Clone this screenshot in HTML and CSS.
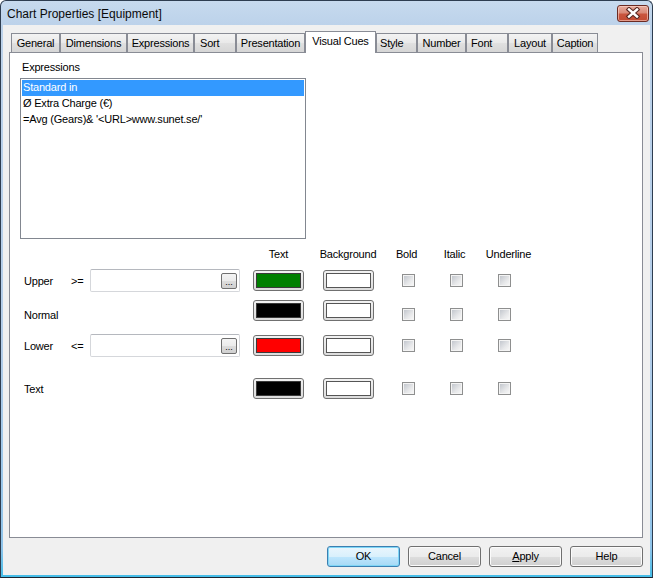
FILE: index.html
```html
<!DOCTYPE html>
<html>
<head>
<meta charset="utf-8">
<title>Chart Properties [Equipment]</title>
<link rel="stylesheet" href="styles.css">
</head>
<body>
<div class="window">
  <div class="titlebar">
    <span class="title">Chart Properties [Equipment]</span>
    <div class="close">
      <svg width="16" height="12" viewBox="0 0 16 12">
        <path d="M4 2.5 L12 9.5 M12 2.5 L4 9.5" stroke="#5a2a24" stroke-width="4.6" stroke-linecap="square" fill="none"/>
        <path d="M4 2.5 L12 9.5 M12 2.5 L4 9.5" stroke="#ffffff" stroke-width="2.4" stroke-linecap="square" fill="none"/>
      </svg>
    </div>
  </div>
  <div class="client">
    <div class="tabs">
      <div class="tab tab-general">General</div>
      <div class="tab tab-dimensions">Dimensions</div>
      <div class="tab tab-expressions">Expressions</div>
      <div class="tab tab-sort">Sort</div>
      <div class="tab tab-presentation">Presentation</div>
      <div class="tab tab-visual active">Visual Cues</div>
      <div class="tab tab-style">Style</div>
      <div class="tab tab-number">Number</div>
      <div class="tab tab-font">Font</div>
      <div class="tab tab-layout">Layout</div>
      <div class="tab tab-caption">Caption</div>
    </div>
    <div class="panel">
      <div class="expr-label">Expressions</div>
      <div class="listbox">
        <div class="item selected">Standard in</div>
        <div class="item">Ø Extra Charge (€)</div>
        <div class="item">=Avg (Gears)&amp; '&lt;URL&gt;www.sunet.se/'</div>
      </div>
      <div class="cues">
        <div class="cue-row head">
          <span class="col-text h">Text</span>
          <span class="col-bg h">Background</span>
          <span class="col-bold h h-bold">Bold</span>
          <span class="col-italic h h-italic">Italic</span>
          <span class="col-under h h-under">Underline</span>
        </div>
        <div class="cue-row r-upper">
          <span class="lbl">Upper</span>
          <span class="op">&gt;=</span>
          <div class="field"><div class="dots">...</div></div>
          <div class="col-text swatch"><i class="fill green"></i></div>
          <div class="col-bg swatch"><i class="fill white"></i></div>
          <i class="col-bold cb"></i>
          <i class="col-italic cb"></i>
          <i class="col-under cb"></i>
        </div>
        <div class="cue-row r-normal">
          <span class="lbl">Normal</span>
          <div class="col-text swatch"><i class="fill black"></i></div>
          <div class="col-bg swatch"><i class="fill white"></i></div>
          <i class="col-bold cb"></i>
          <i class="col-italic cb"></i>
          <i class="col-under cb"></i>
        </div>
        <div class="cue-row r-lower">
          <span class="lbl">Lower</span>
          <span class="op">&lt;=</span>
          <div class="field"><div class="dots">...</div></div>
          <div class="col-text swatch"><i class="fill red"></i></div>
          <div class="col-bg swatch"><i class="fill white"></i></div>
          <i class="col-bold cb"></i>
          <i class="col-italic cb"></i>
          <i class="col-under cb"></i>
        </div>
        <div class="cue-row r-text">
          <span class="lbl">Text</span>
          <div class="col-text swatch"><i class="fill black"></i></div>
          <div class="col-bg swatch"><i class="fill white"></i></div>
          <i class="col-bold cb"></i>
          <i class="col-italic cb"></i>
          <i class="col-under cb"></i>
        </div>
      </div>
    </div>
    <div class="buttons">
      <div class="btn default">OK</div>
      <div class="btn">Cancel</div>
      <div class="btn"><u>A</u>pply</div>
      <div class="btn">Help</div>
    </div>
  </div>
</div>
</body>
</html>
```
FILE: styles.css
```css
html, body {
  margin: 0;
  padding: 0;
  background: #ffffff;
}
body {
  width: 653px;
  height: 578px;
  font-family: "Liberation Sans", Arial, sans-serif;
  font-size: 11px;
  color: #000;
}
.window {
  width: 653px;
  height: 578px;
  box-sizing: border-box;
  border: 1px solid #2e3d50;
  border-bottom-color: #1b2430;
  border-radius: 6px 6px 0 0;
  background: linear-gradient(#c7daee 0px, #bcd2ea 24px, #b3cde9 60%, #8fc4ea 95%, #43bde8 100%);
  display: flex;
  flex-direction: column;
  overflow: hidden;
}
.titlebar {
  height: 24px;
  flex: none;
  display: flex;
  align-items: center;
  justify-content: space-between;
  padding: 0 3px 0 6px;
}
.title {
  font-family: "Liberation Sans", Arial, sans-serif;
  font-size: 12px;
  color: #0a0a0a;
  padding-top: 2px;
}
.close {
  width: 32px;
  height: 17px;
  box-sizing: border-box;
  border: 1px solid #6b2a22;
  border-radius: 3px;
  background: linear-gradient(#e7aa9c 0%, #d98a78 45%, #c9553e 55%, #c34a32 100%);
  box-shadow: inset 0 0 0 1px rgba(255, 220, 210, 0.55);
  display: flex;
  align-items: center;
  justify-content: center;
}
.close svg {
  display: block;
}
.client {
  flex: 1;
  margin: 0 2px 2px 2px;
  background: #f0f0f0;
  display: flex;
  flex-direction: column;
  padding-top: 6px;
  box-sizing: border-box;
  letter-spacing: -0.2px;
}
.tabs {
  height: 21px;
  display: flex;
  align-items: flex-end;
  margin-left: 8px;
  flex: none;
}
.tab {
  height: 19px;
  box-sizing: border-box;
  border: 1px solid #898c95;
  border-bottom: none;
  background: linear-gradient(#f3f3f3 0%, #e9e9e9 50%, #e0e0e0 51%, #d6d6d6 100%);
  text-align: center;
  line-height: 18px;
  white-space: nowrap;
}
.tab.active {
  height: 22px;
  margin-bottom: -1px;
  background: #ffffff;
  position: relative;
  z-index: 1;
  line-height: 19px;
}
.tab-general { width: 49px; }
.tab-dimensions { width: 67px; }
.tab-expressions { width: 67px; }
.tab-sort { width: 42px; text-align: left; padding-left: 5px; }
.tab-presentation { width: 69px; }
.tab-visual { width: 71px; }
.tab-style { width: 41px; text-align: left; padding-left: 3px; }
.tab-number { width: 49px; }
.tab-font { width: 42px; text-align: left; padding-left: 4px; }
.tab-layout { width: 44px; }
.tab-caption { width: 46px; }
.panel {
  height: 486px;
  box-sizing: border-box;
  margin: 0 7px 0 6px;
  border: 1px solid #898c95;
  background: #ffffff;
  flex: none;
}
.expr-label {
  margin: 8px 0 0 12px;
  line-height: 13px;
}
.listbox {
  margin: 4px 0 0 10px;
  width: 286px;
  height: 161px;
  box-sizing: border-box;
  border: 1px solid #828790;
  padding: 1px;
}
.item {
  height: 16px;
  line-height: 15px;
  padding-left: 1px;
  white-space: nowrap;
}
.item.selected {
  background: #3399ff;
  color: #ffffff;
}
.cues {
  margin-top: 8px;
  padding-left: 14px;
}
.cue-row {
  display: grid;
  grid-template-columns: 48px 18px 150px 77px 62px 59px 37px 59px;
  align-items: center;
  height: 23px;
}
.cue-row.head {
  height: 14px;
  line-height: 14px;
}
.r-upper { margin-top: 8px; }
.r-normal { margin-top: 7px; }
.r-lower { margin-top: 12px; }
.r-text { margin-top: 20px; }
.r-normal .lbl, .r-normal .cb { margin-top: 8px; }
.lbl { grid-column: 1; }
.op { grid-column: 2; margin-left: -1px; }
.field { grid-column: 3; }
.col-text { grid-column: 4; justify-self: center; }
.col-bg { grid-column: 5; justify-self: center; }
.col-bold { grid-column: 6; justify-self: center; }
.col-italic { grid-column: 7; justify-self: center; }
.col-under { grid-column: 8; justify-self: center; }
.h { white-space: nowrap; }
.h-bold, .h-italic { margin-right: 4px; }
.h-under { margin-left: 8px; }
.field {
  width: 150px;
  height: 23px;
  box-sizing: border-box;
  border: 1px solid #d5d7db;
  border-top-color: #b5b8be;
  border-radius: 2px;
  background: #ffffff;
  display: flex;
  align-items: center;
  justify-content: flex-end;
  padding-right: 2px;
}
.dots {
  width: 16px;
  height: 16px;
  box-sizing: border-box;
  border: 1px solid #707070;
  border-radius: 2px;
  background: linear-gradient(#f4f4f4 0%, #ebebeb 50%, #dddddd 51%, #d0d0d0 100%);
  font-size: 9px;
  letter-spacing: 0;
  line-height: 17px;
  text-align: center;
}
.swatch {
  display: block;
  width: 51px;
  height: 21px;
  box-sizing: border-box;
  border: 1px solid #707070;
  border-radius: 3px;
  background: linear-gradient(#f2f2f2, #dcdcdc);
  padding: 2px;
}
.fill {
  display: block;
  height: 100%;
  box-sizing: border-box;
  border: 1px solid #3a3a3a;
}
.fill.green { background: #008000; }
.fill.black { background: #000000; }
.fill.red { background: #ff0000; }
.fill.white { background: #ffffff; border-color: #555555; }
.cb {
  display: block;
  width: 13px;
  height: 13px;
  box-sizing: border-box;
  border: 1px solid #8e8f8f;
  padding: 1px;
  background: linear-gradient(135deg, #c3c7ce 0%, #e6e7e9 60%, #f6f6f6 100%) content-box, #f4f4f4;
}
.buttons {
  display: flex;
  justify-content: flex-end;
  gap: 8px;
  margin-top: 8px;
  padding-right: 7px;
  flex: none;
}
.btn {
  width: 73px;
  height: 21px;
  box-sizing: border-box;
  border: 1px solid #707070;
  border-radius: 3px;
  background: linear-gradient(#f2f2f2 0%, #ebebeb 50%, #dddddd 51%, #cfcfcf 100%);
  box-shadow: inset 0 0 0 1px #fbfbfb;
  text-align: center;
  line-height: 19px;
}
.btn.default {
  border-color: #3c7fb1;
  background: linear-gradient(#eaf6fd 0%, #d9f0fc 50%, #bee6fd 51%, #a7d9f5 100%);
  box-shadow: inset 0 0 0 1px #7fd6f6;
}
.btn u {
  text-decoration: underline;
}
```
